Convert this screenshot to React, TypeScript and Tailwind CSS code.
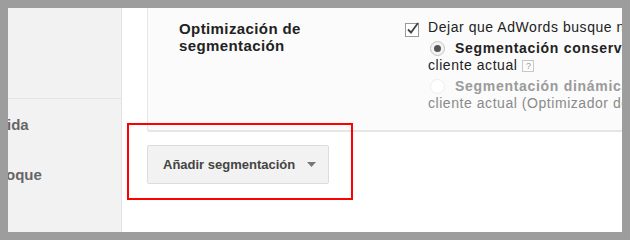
function Checkbox() {
  return (
    <svg width="17" height="17" viewBox="0 0 17 17" className="shrink-0">
      <rect x="0.5" y="3.5" width="13" height="13" fill="#fff" stroke="#9a9a9a" />
      <path d="M3 9.5 L6 12.5 L13 3" fill="none" stroke="#444" strokeWidth="1.8" />
    </svg>
  );
}

function Radio({ checked, disabled }: { checked?: boolean; disabled?: boolean }) {
  return (
    <span
      className={
        disabled
          ? "flex h-[15px] w-[15px] shrink-0 items-center justify-center rounded-full border border-[#ededed] bg-white"
          : "flex h-[15px] w-[15px] shrink-0 items-center justify-center rounded-full border border-[#c4c4c4] bg-[#f3f3f3]"
      }
    >
      {checked && <span className="h-[7px] w-[7px] rounded-full bg-[#555]" />}
    </span>
  );
}

export default function App() {
  return (
    <div
      className="h-[240px] w-[630px] bg-[#9d9d9d] p-[8px]"
      style={{ fontFamily: '"Liberation Sans", Arial, sans-serif' }}
    >
      <div className="relative flex h-[224px] w-[614px] overflow-hidden bg-white">
        {/* sidebar */}
        <div className="flex w-[114px] shrink-0 flex-col overflow-hidden border-r border-[#e3e3e3] bg-[#f2f2f2]">
          <div className="h-[91px] border-b border-[#e3e3e3]" />
          <div className="ml-[-1px] pt-[17px] text-[15px] font-bold leading-[18px] text-[#666]">ida</div>
          <div className="ml-[-2px] pt-[32px] text-[15px] font-bold leading-[18px] text-[#666]">oque</div>
        </div>

        {/* main */}
        <div className="flex min-w-0 flex-1 flex-col pl-[25px]">
          <div className="flex h-[124px] rounded-bl-[3px] border-b-2 border-l border-[#e6e6e6] bg-[#fbfbfb] pt-[12px]">
            <div className="w-[257px] shrink-0 pl-[31px] text-[15px] font-bold leading-[17px] tracking-[0.4px] text-[#222]">
              Optimización de
              <br />
              segmentación
            </div>
            <div className="min-w-0 flex-1 whitespace-nowrap text-[14px] leading-[17px] tracking-[0.55px] text-[#222]">
              <div className="flex items-center gap-[6px]">
                <Checkbox />
                <span className="-mt-[2px]">Dejar que AdWords busque nuevos clientes</span>
              </div>
              <div className="pl-[23px]">
                <div className="mt-[3px] flex items-center gap-[10px] pl-[2px]">
                  <Radio checked />
                  <span className="font-bold tracking-[0.7px]">Segmentación conservadora: llegar a clientes similares a su</span>
                </div>
                <div className="flex items-center gap-[5px]">
                  <span>cliente actual</span>
                  <span className="mt-[1px] flex h-[12px] w-[12px] items-center justify-center border border-[#c8c8c8] text-[9px] leading-none tracking-normal text-[#999]">
                    ?
                  </span>
                </div>
                <div className="mt-[4px] flex items-center gap-[10px] pl-[2px]">
                  <Radio disabled />
                  <span className="font-bold tracking-[0.7px] text-[#9a9a9a]">Segmentación dinámica: llegar a clientes similares a su</span>
                </div>
                <div className="text-[#8a8a8a]">cliente actual (Optimizador de conversiones)</div>
              </div>
            </div>
          </div>

          <div className="pt-[13px]">
            <button className="flex h-[39px] w-[182px] items-center rounded-[2px] border border-[#dcdcdc] bg-[#f2f2f2] pl-[15px] text-[13px] font-bold text-[#444]">
              Añadir segmentación
              <svg width="9" height="5" viewBox="0 0 9 5" className="ml-[12px]">
                <path d="M0 0 H9 L4.5 5 Z" fill="#777" />
              </svg>
            </button>
          </div>
        </div>

        {/* red annotation box */}
        <div className="pointer-events-none absolute left-[119px] top-[115px] h-[77px] w-[226px] border-2 border-[#ff0000]" />
      </div>
    </div>
  );
}
